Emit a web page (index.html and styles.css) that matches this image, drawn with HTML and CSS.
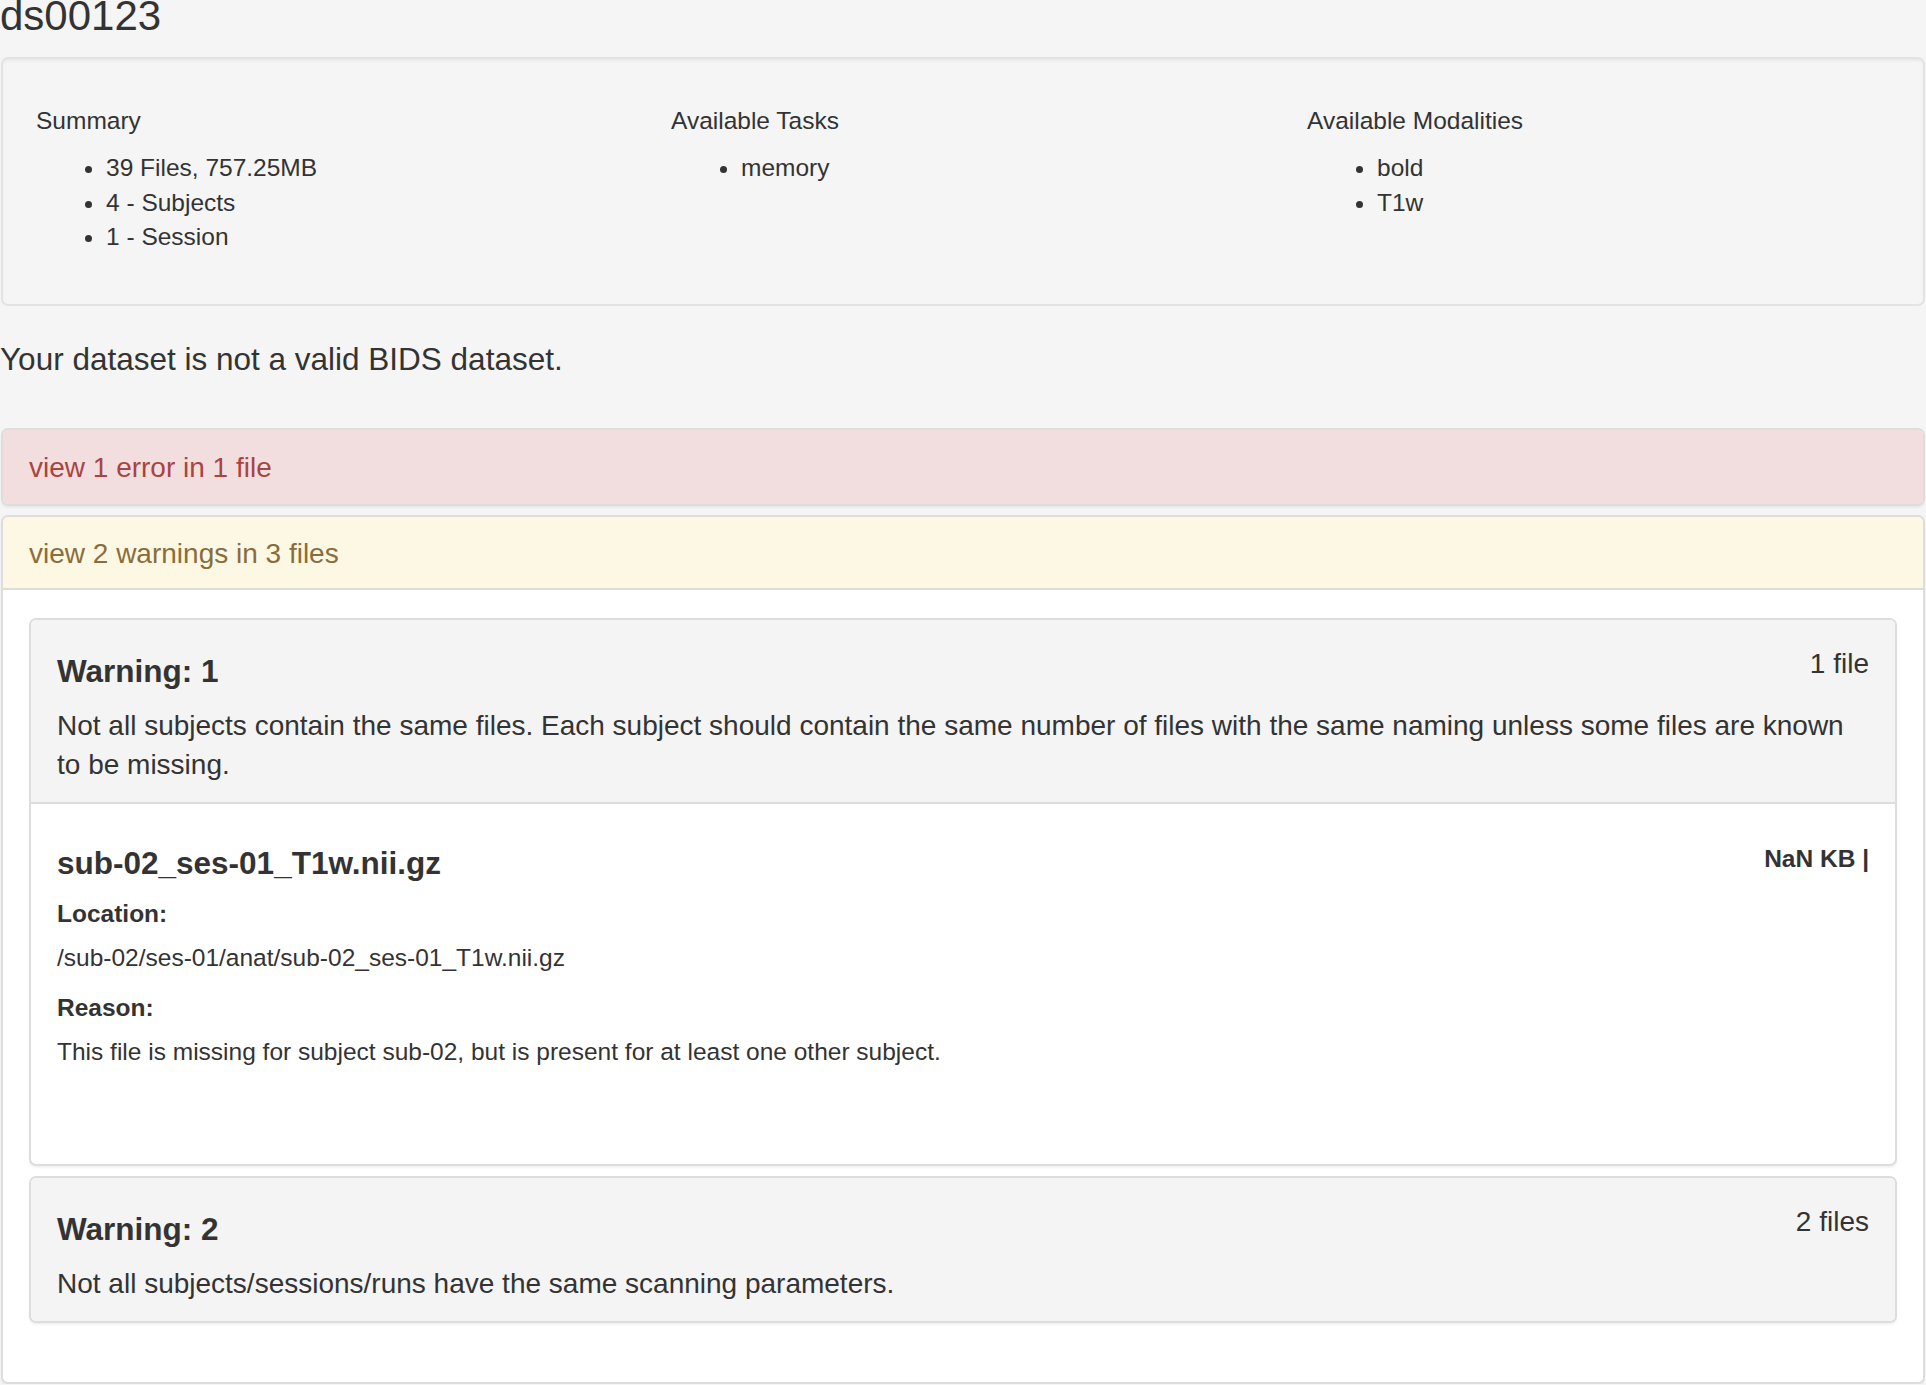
FILE: index.html
```html
<!DOCTYPE html>
<html lang="en">
<head>
<meta charset="utf-8">
<title>ds00123</title>
<link rel="stylesheet" href="styles.css">
</head>
<body>
<h3 class="title">ds00123</h3>

<div class="well">
  <div class="summary-grid">
    <div class="col">
      <div class="col-title">Summary</div>
      <ul class="col-list">
        <li>39 Files, 757.25MB</li>
        <li>4 - Subjects</li>
        <li>1 - Session</li>
      </ul>
    </div>
    <div class="col">
      <div class="col-title">Available Tasks</div>
      <ul class="col-list">
        <li>memory</li>
      </ul>
    </div>
    <div class="col">
      <div class="col-title">Available Modalities</div>
      <ul class="col-list">
        <li>bold</li>
        <li>T1w</li>
      </ul>
    </div>
  </div>
</div>

<h4 class="status">Your dataset is not a valid BIDS dataset.</h4>

<div class="panel panel-error">
  <div class="panel-heading">view 1 error in 1 file</div>
</div>

<div class="panel panel-warning">
  <div class="panel-heading">view 2 warnings in 3 files</div>
  <div class="panel-body">
    <div class="issue">
      <div class="issue-head">
        <div class="issue-row">
          <h4 class="issue-title">Warning: 1</h4>
          <span class="issue-count">1 file</span>
        </div>
        <p class="issue-text">Not all subjects contain the same files. Each subject should contain the same number of files with the same naming unless some files are known to be missing.</p>
      </div>
      <div class="issue-body">
        <div class="issue-row">
          <h4 class="file-name">sub-02_ses-01_T1w.nii.gz</h4>
          <span class="file-size">NaN KB |</span>
        </div>
        <div class="label">Location:</div>
        <div class="value">/sub-02/ses-01/anat/sub-02_ses-01_T1w.nii.gz</div>
        <div class="label">Reason:</div>
        <div class="value">This file is missing for subject sub-02, but is present for at least one other subject.</div>
      </div>
    </div>

    <div class="issue">
      <div class="issue-head">
        <div class="issue-row">
          <h4 class="issue-title">Warning: 2</h4>
          <span class="issue-count">2 files</span>
        </div>
        <p class="issue-text">Not all subjects/sessions/runs have the same scanning parameters.</p>
      </div>
    </div>
  </div>
</div>
</body>
</html>
```

FILE: styles.css
```css
html, body {
  margin: 0;
  padding: 0;
}

body {
  background: #f5f5f5;
  color: #333333;
  font-family: "Liberation Sans", Arial, sans-serif;
  font-size: 24.5px;
  line-height: 34.3px;
  overflow: hidden;
}

.title {
  font-size: 42px;
  font-weight: normal;
  line-height: 46px;
  margin: -7px 0 18px 0;
}

.well {
  margin: 0 1px;
  background: #f5f5f5;
  border: 2px solid #e3e3e3;
  border-radius: 7px;
  box-shadow: inset 0 2px 2px rgba(0, 0, 0, 0.05);
  padding: 33px;
}

.summary-grid {
  display: grid;
  grid-template-columns: 635px 636px 1fr;
}

.col-title {
  margin-top: 12px;
}

.col-list {
  margin: 13px 0 16.5px 0;
  padding-left: 70px;
}

.status {
  font-size: 31.5px;
  font-weight: normal;
  line-height: 34.65px;
  margin: 36.5px 0 51px 0;
}

.panel {
  margin: 0 1px;
  border: 2px solid #dddddd;
  border-radius: 7px;
  box-shadow: 0 2px 2px rgba(0, 0, 0, 0.05);
  overflow: hidden;
}

.panel + .panel {
  margin-top: 9.5px;
}

.panel-heading {
  font-size: 28px;
  line-height: 39.2px;
  padding: 17px 26px 15px;
}

.panel-error .panel-heading {
  background: #f2dede;
  color: #a94442;
  padding: 18.5px 26px 16px;
}

.panel-warning .panel-heading {
  background: #fcf8e3;
  color: #8a6d3b;
  border-bottom: 2px solid #dddddd;
}

.panel-body {
  background: #ffffff;
  padding: 28px 26px 59px 26px;
}

.issue {
  border: 2px solid #dddddd;
  border-radius: 7px;
  background: #ffffff;
  box-shadow: 0 2px 2px rgba(0, 0, 0, 0.05);
  overflow: hidden;
}

.issue + .issue {
  margin-top: 10px;
}

.issue-head {
  background: #f4f4f4;
  padding: 34px 26px 18px 26px;
}

.issue-body {
  border-top: 2px solid #dddddd;
  padding: 42px 26px 95px 26px;
}

.issue-row {
  display: flex;
  justify-content: space-between;
  align-items: flex-start;
}

.issue-title,
.file-name {
  margin: 0;
  font-size: 31.5px;
  font-weight: bold;
  line-height: 34.65px;
}

.issue-count {
  font-size: 28px;
  line-height: 20px;
}

.file-size {
  font-size: 24.5px;
  font-weight: bold;
  line-height: 20px;
  margin-top: 3px;
}

.issue-text {
  margin: 17px 0 0 0;
  font-size: 28px;
  line-height: 39.2px;
}

.label {
  font-weight: bold;
  margin-top: 16px;
}

.value {
  margin-top: 9.5px;
}
```
